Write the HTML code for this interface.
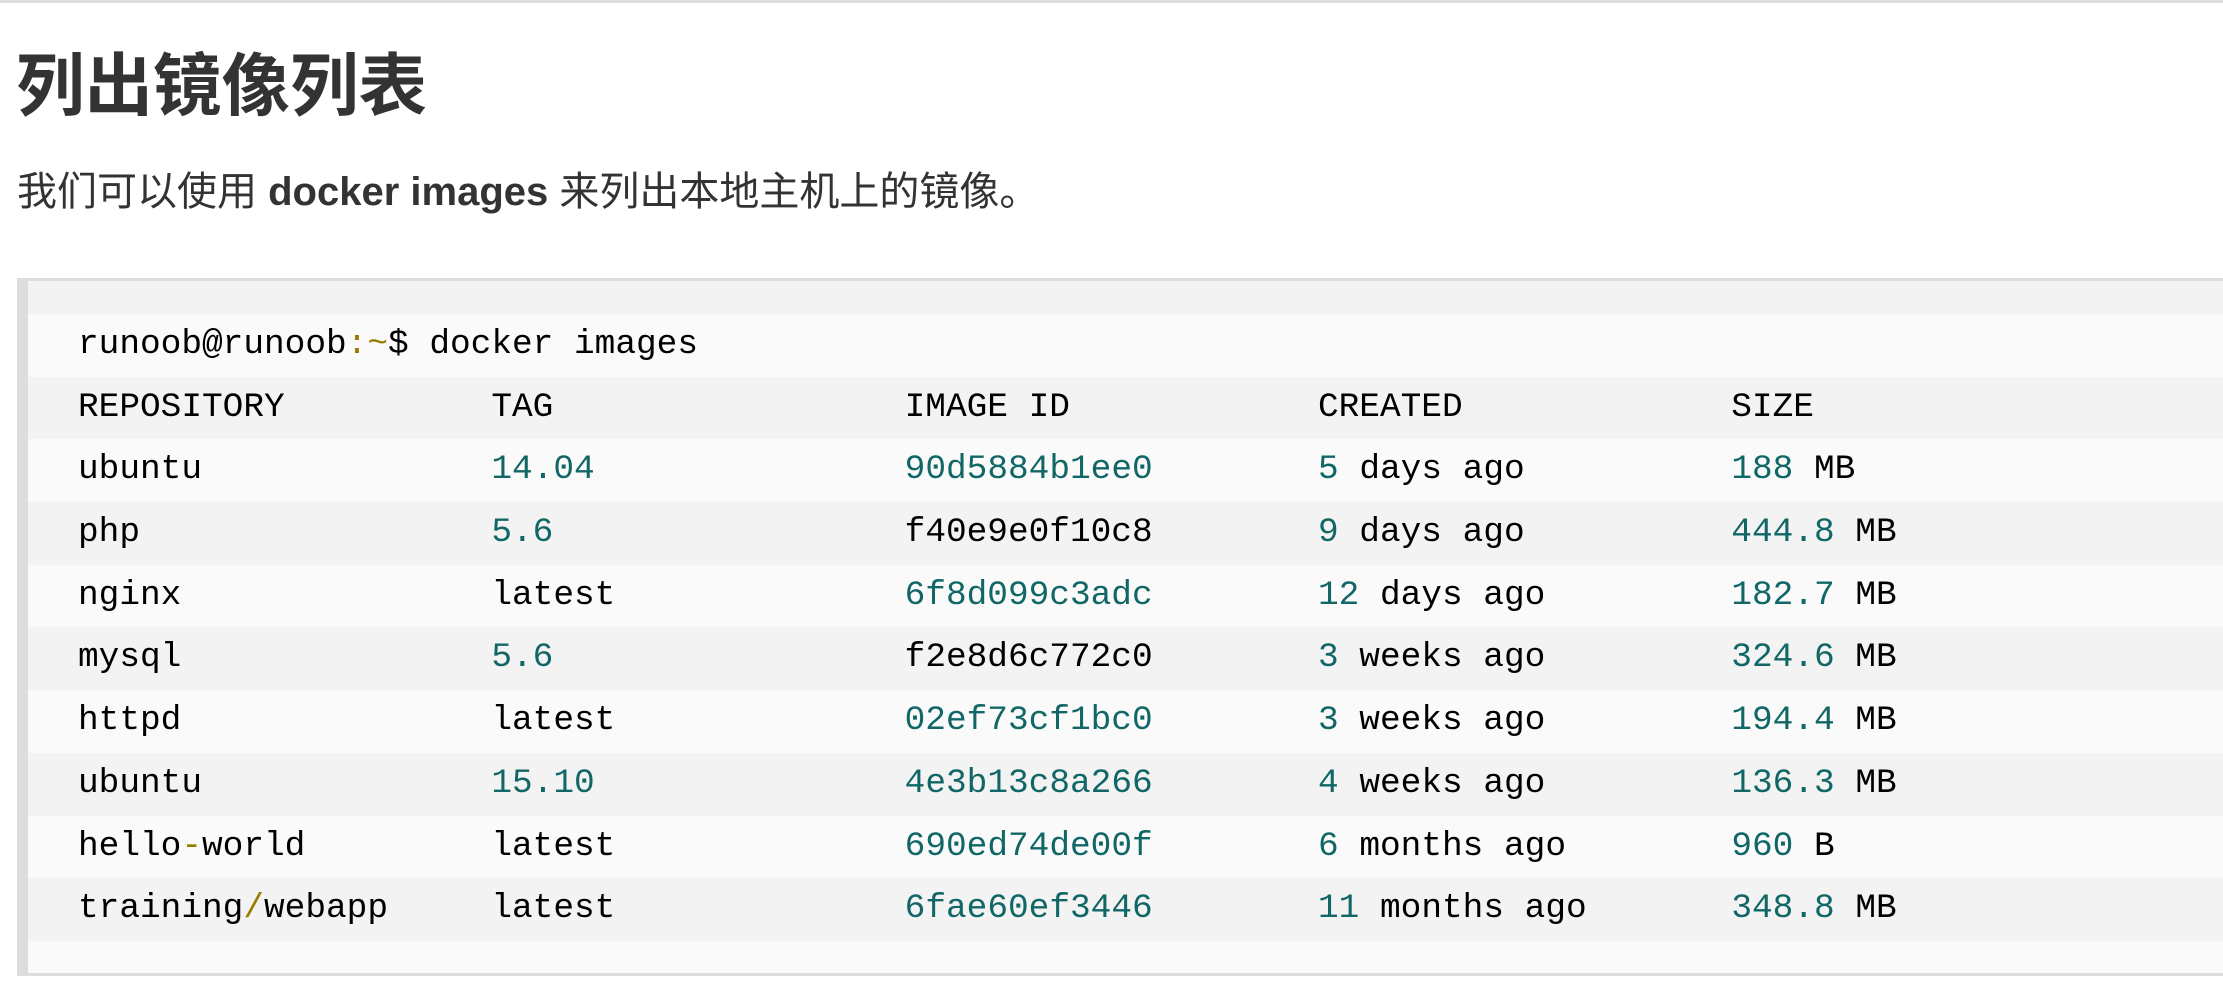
<!DOCTYPE html>
<html><head><meta charset="utf-8"><style>
html,body{margin:0;padding:0;background:#fff;width:2223px;height:998px;overflow:hidden}
body{position:relative;font-family:"Liberation Sans","Noto Sans CJK SC",sans-serif;color:#333}
.topline{position:absolute;left:0;top:0;width:2223px;height:3px;background:#ddd}
h1{position:absolute;left:16px;top:42px;margin:0;font-size:68.5px;line-height:90px;font-weight:bold;color:#333;font-family:"Liberation Sans","Noto Sans CJK SC",sans-serif}
p{position:absolute;left:17px;top:167px;margin:0;font-size:40px;line-height:50px;color:#333;white-space:nowrap}
.box{position:absolute;left:17px;top:278px;width:2250px;height:692px;border-left:11px solid #ddd;border-top:3px solid #ddd;border-bottom:3px solid #ddd;background:#fafafa}
.strip{height:33px;background:#f3f3f3}
.r{height:62.7px;line-height:62.7px;padding-left:50px;white-space:pre;font-family:"Liberation Mono",monospace;font-size:34.45px;color:#000}
.r:nth-child(odd){background:#f3f3f3}
.r:nth-child(even){background:#fafafa}
.n{color:#116666}
.o{color:#9a7d00}
</style></head><body>
<div class="topline"></div>
<h1>列出镜像列表</h1>
<p>我们可以使用 <b>docker images</b> 来列出本地主机上的镜像。</p>
<div class="box">
<div class="strip"></div>
<div class="r">runoob@runoob<span class="o">:~</span>$ docker images</div>
<div class="r">REPOSITORY          TAG                 IMAGE ID            CREATED             SIZE</div>
<div class="r">ubuntu              <span class="n">14.04</span>               <span class="n">90d5884b1ee0</span>        <span class="n">5</span> days ago          <span class="n">188</span> MB</div>
<div class="r">php                 <span class="n">5.6</span>                 f40e9e0f10c8        <span class="n">9</span> days ago          <span class="n">444.8</span> MB</div>
<div class="r">nginx               latest              <span class="n">6f8d099c3adc</span>        <span class="n">12</span> days ago         <span class="n">182.7</span> MB</div>
<div class="r">mysql               <span class="n">5.6</span>                 f2e8d6c772c0        <span class="n">3</span> weeks ago         <span class="n">324.6</span> MB</div>
<div class="r">httpd               latest              <span class="n">02ef73cf1bc0</span>        <span class="n">3</span> weeks ago         <span class="n">194.4</span> MB</div>
<div class="r">ubuntu              <span class="n">15.10</span>               <span class="n">4e3b13c8a266</span>        <span class="n">4</span> weeks ago         <span class="n">136.3</span> MB</div>
<div class="r">hello<span class="o">-</span>world         latest              <span class="n">690ed74de00f</span>        <span class="n">6</span> months ago        <span class="n">960</span> B</div>
<div class="r">training<span class="o">/</span>webapp     latest              <span class="n">6fae60ef3446</span>        <span class="n">11</span> months ago       <span class="n">348.8</span> MB</div>
</div>
</body></html>
